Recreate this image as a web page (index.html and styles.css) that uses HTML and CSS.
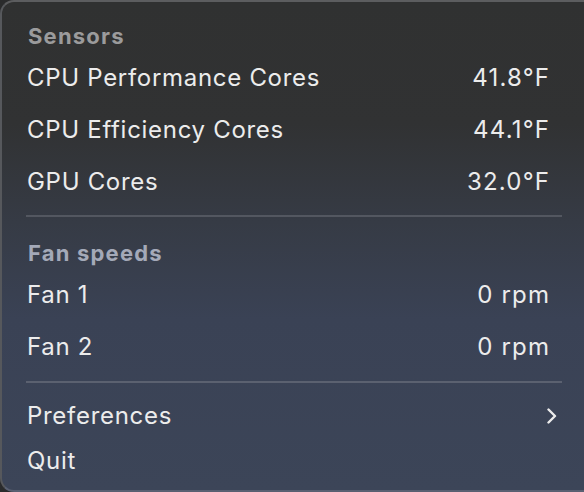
FILE: index.html
```html
<!DOCTYPE html>
<html>
<head>
<meta charset="utf-8">
<link rel="stylesheet" href="styles.css">
</head>
<body>
<div class="menu">
  <div class="header">Sensors</div>
  <div class="row"><span>CPU Performance Cores</span><span class="val">41.8°F</span></div>
  <div class="row"><span>CPU Efficiency Cores</span><span class="val">44.1°F</span></div>
  <div class="row"><span>GPU Cores</span><span class="val">32.0°F</span></div>
  <div class="sep sep1"></div>
  <div class="header header-fan">Fan speeds</div>
  <div class="row"><span>Fan 1</span><span class="val">0 rpm</span></div>
  <div class="row"><span>Fan 2</span><span class="val">0 rpm</span></div>
  <div class="sep sep2"></div>
  <div class="row short"><span>Preferences</span>
    <svg class="chev" width="12" height="16" viewBox="0 0 12 16"><path d="M2.5 1.5 L9 8 L2.5 14.5" fill="none" stroke="#ececec" stroke-width="2.4" stroke-linecap="round" stroke-linejoin="round"/></svg>
  </div>
  <div class="row short"><span>Quit</span></div>
</div>
</body>
</html>
```
FILE: styles.css
```css
html, body {
  margin: 0;
  padding: 0;
  width: 584px;
  height: 492px;
  overflow: hidden;
  background: #2a2b2c;
}
.menu {
  box-sizing: border-box;
  width: 600px;
  height: 492px;
  border: 2px solid #5c5d5f;
  border-right: none;
  border-bottom-color: #596072;
  border-left-color: #56585c;
  border-radius: 14px 0 0 14px;
  background: linear-gradient(180deg, #303131 0%, #313233 25%, #363b45 45%, #3a4255 65%, #3c4558 100%);
  padding: 18px 0 0 0;
  font-family: Inter, "Noto Sans", sans-serif;
  color: #ececec;
}
.header {
  height: 31px;
  display: flex;
  align-items: center;
  padding-left: 26px;
  font-size: 22px;
  font-weight: 700;
  letter-spacing: 1.2px;
  color: #9b9b9c;
}
.header-fan {
  color: #a4a9b8;
  margin-top: 20.5px;
}
.row {
  height: 52px;
  display: flex;
  align-items: center;
  justify-content: space-between;
  padding-left: 25px;
  padding-right: 51px;
  font-size: 24px;
  letter-spacing: 0.7px;
}
.row.short {
  height: 45px;
}
.val {
  text-align: right;
  letter-spacing: 1.2px;
  margin-right: -1.2px;
}
.sep {
  height: 2px;
  margin-left: 24px;
  margin-right: 38px;
  background: #5b6170;
}
.sep1 {
  margin-top: 8px;
  background: #535760;
}
.sep2 {
  margin-top: 8px;
  margin-bottom: 10.5px;
}
.chev {
  margin-right: -9px;
}
```
